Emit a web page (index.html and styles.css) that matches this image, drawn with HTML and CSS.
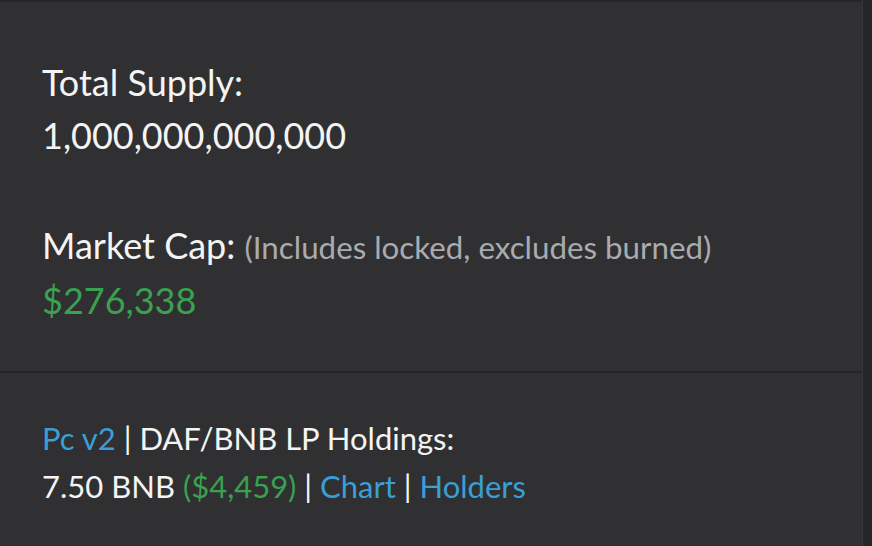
FILE: index.html
```html
<!DOCTYPE html>
<html lang="en">
<head>
    <meta charset="UTF-8">
    <meta name="viewport" content="width=device-width, initial-scale=1.0">
    <title>Token Stats</title>
    <link rel="stylesheet" href="styles.css">
</head>
<body>
    <div class="page">
        <div class="panel">
            <div class="panel-top"></div>

            <!-- Supply and market cap -->
            <div class="stat-section">
                <div class="stat">
                    <div class="stat-label">Total Supply:</div>
                    <div class="stat-value">1,000,000,000,000</div>
                </div>
                <div class="stat">
                    <div class="stat-label">Market Cap: <span class="muted">(Includes locked, excludes burned)</span></div>
                    <div class="stat-value green">$276,338</div>
                </div>
            </div>

            <!-- LP holdings -->
            <div class="lp-section">
                <div><a href="#" class="link">Pc v2</a> | DAF/BNB LP Holdings:</div>
                <div>7.50 BNB <span class="green">($4,459)</span> | <a href="#" class="link">Chart</a> | <a href="#" class="link">Holders</a></div>
            </div>
        </div>
        <div class="side-strip"></div>
    </div>
</body>
</html>
```

FILE: styles.css
```css
body {
    font-family: 'Lato', 'Noto Sans', sans-serif;
    background-color: #303032;
    margin: 0;
    padding: 0;
    color: #f4f4f4;
    height: 546px;
    overflow: hidden;
}

.page {
    display: flex;
    height: 100%;
}

.panel {
    flex: 1;
    display: flex;
    flex-direction: column;
    border-right: 1px solid #38383a;
}

.side-strip {
    width: 9px;
    background-color: #262628;
}

.panel-top {
    height: 10px;
    border-bottom: 2px solid #272729;
}

.stat-section {
    display: flex;
    flex-direction: column;
    gap: 57px;
    padding: 54px 42px 44px 42px;
    border-bottom: 2px solid #262628;
}

.stat-label, .stat-value {
    font-size: 36px;
    line-height: 53px;
}

.muted {
    color: #a9abae;
    font-size: 31.3px;
}

.green {
    color: #3aa14f;
}

.lp-section {
    padding: 41px 42px;
    font-size: 31px;
    line-height: 48px;
}

.link {
    color: #3a9fd6;
    text-decoration: none;
}
```
